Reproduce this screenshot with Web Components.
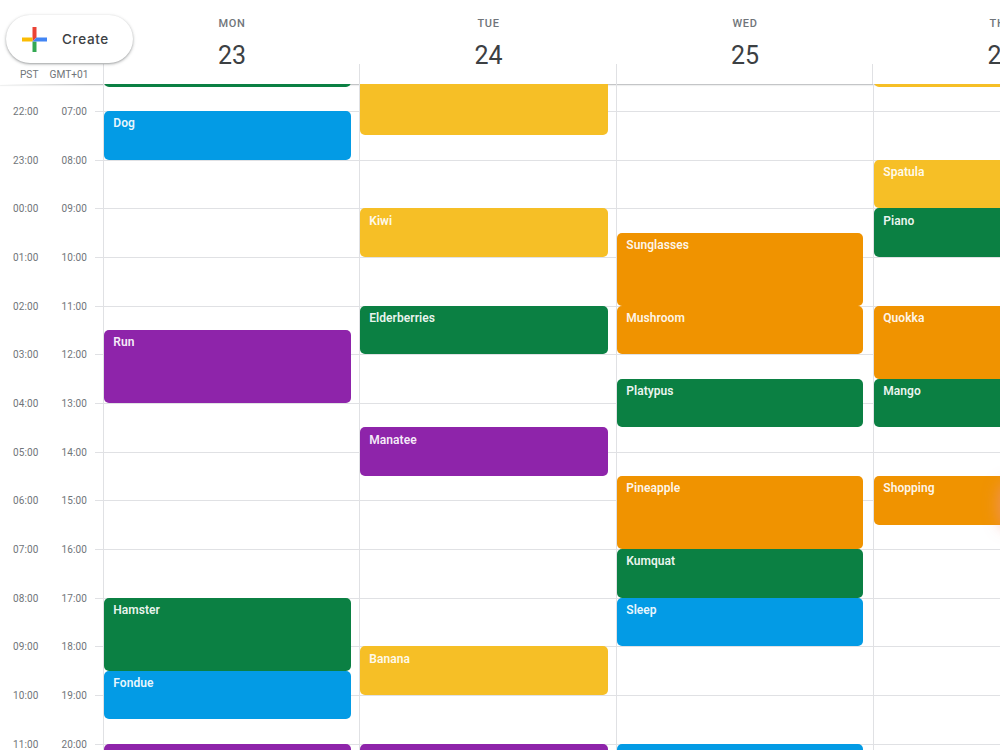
<!DOCTYPE html>
<html lang="en">
<head>
<meta charset="utf-8">
<title>Calendar</title>
<style>
  body {
    margin: 0;
    overflow: hidden;
    background: #fff;
    font-family: Roboto, sans-serif;
  }
</style>
</head>
<body>
<week-calendar>
  <create-button slot="create">Create</create-button>
  <span slot="zone">PST</span>
  <span slot="zone">GMT+01</span>

  <day-heading slot="heading" date="23">MON</day-heading>
  <day-heading slot="heading" date="24">TUE</day-heading>
  <day-heading slot="heading" date="25">WED</day-heading>
  <day-heading slot="heading" date="26">THU</day-heading>

  <time-scale slot="scale" offset="-9"></time-scale>

  <day-column slot="day">
    <calendar-event start="6" end="6.5" color="green"></calendar-event>
    <calendar-event start="7" end="8" color="blue">Dog</calendar-event>
    <calendar-event start="11.5" end="13" color="purple">Run</calendar-event>
    <calendar-event start="17" end="18.5" color="green">Hamster</calendar-event>
    <calendar-event start="18.5" end="19.5" color="blue">Fondue</calendar-event>
    <calendar-event start="20" end="21" color="purple"></calendar-event>
  </day-column>
  <day-column slot="day">
    <calendar-event start="6" end="7.5" color="yellow"></calendar-event>
    <calendar-event start="9" end="10" color="yellow">Kiwi</calendar-event>
    <calendar-event start="11" end="12" color="green">Elderberries</calendar-event>
    <calendar-event start="13.5" end="14.5" color="purple">Manatee</calendar-event>
    <calendar-event start="18" end="19" color="yellow">Banana</calendar-event>
    <calendar-event start="20" end="21" color="purple"></calendar-event>
  </day-column>
  <day-column slot="day" style="--gutter: 10px">
    <calendar-event start="9.5" end="11" color="orange">Sunglasses</calendar-event>
    <calendar-event start="11" end="12" color="orange">Mushroom</calendar-event>
    <calendar-event start="12.5" end="13.5" color="green">Platypus</calendar-event>
    <calendar-event start="14.5" end="16" color="orange">Pineapple</calendar-event>
    <calendar-event start="16" end="17" color="green">Kumquat</calendar-event>
    <calendar-event start="17" end="18" color="blue">Sleep</calendar-event>
    <calendar-event start="20" end="21" color="blue"></calendar-event>
  </day-column>
  <day-column slot="day">
    <calendar-event start="6" end="6.5" color="yellow"></calendar-event>
    <calendar-event start="8" end="9" color="yellow">Spatula</calendar-event>
    <calendar-event start="9" end="10" color="green">Piano</calendar-event>
    <calendar-event start="11" end="12.5" color="orange">Quokka</calendar-event>
    <calendar-event start="12.5" end="13.5" color="green">Mango</calendar-event>
    <calendar-event start="14.5" end="15.5" color="orange">Shopping</calendar-event>
  </day-column>
</week-calendar>

<script>
'use strict'
;(function() {
  const FIRST_HOUR = 6
  const LAST_HOUR = 21

  // attaches an open shadow root filled with the given markup
  function render(element, html) {
    const shadow = element.attachShadow({ mode: 'open' })
    shadow.innerHTML = html
    return shadow
  }

  class WeekCalendar extends HTMLElement {
    constructor() {
      super()
      render(this, `
        <style>
          :host {
            --half: 24.340px;
            --line: #e0e1e4;
            display: flex;
            flex-direction: column;
            position: relative;
            width: 1000px;
            height: 750px;
            overflow: hidden;
          }
          .header {
            display: flex;
            flex: none;
            height: 84px;
          }
          .corner {
            display: flex;
            flex-direction: column;
            flex: none;
            width: 103px;
            height: 84px;
          }
          .zones {
            display: grid;
            grid-template-columns: 38.500px 50px;
            margin-top: 6px;
            line-height: 12px;
            font-size: 10.200px;
            color: #70757a;
            text-align: right;
          }
          .headings,
          .days {
            display: grid;
            flex: none;
            grid-template-columns: 256px 257px 257px 257px;
          }
          .headings {
            grid-template-columns: 256px 257px 256px 257px;
          }
          .rule {
            flex: none;
            height: 1px;
            background: linear-gradient(to right, #fff, #c4c5c7 90px);
            box-shadow: 0 1px 1px rgba(60, 64, 67, 0.1);
          }
          /* overlaps the rule so events cover it */
          .viewport {
            flex: 1;
            min-height: 0;
            margin-top: -1px;
            overflow: hidden;
            position: relative;
          }
          /* scrolled so that the six o'clock row is partly hidden */
          .body {
            display: flex;
            margin-top: -21.650px;
          }
          .glow {
            position: absolute;
            left: 1001px;
            top: 484px;
            width: 50px;
            height: 42px;
            border-radius: 12px;
            box-shadow: 0 0 16px 2px rgba(240, 145, 130, 0.7);
          }
        </style>
        <div class="header">
          <div class="corner">
            <slot name="create"></slot>
            <div class="zones"><slot name="zone"></slot></div>
          </div>
          <div class="headings"><slot name="heading"></slot></div>
        </div>
        <div class="rule"></div>
        <div class="viewport">
          <div class="body">
            <slot name="scale"></slot>
            <div class="days"><slot name="day"></slot></div>
          </div>
        </div>
        <div class="glow"></div>
      `)
    }
  }

  class CreateButton extends HTMLElement {
    constructor() {
      super()
      render(this, `
        <style>
          :host {
            display: flex;
            align-items: center;
            box-sizing: border-box;
            flex: none;
            width: 127px;
            height: 48px;
            margin: 15px 0 0 6px;
            padding-left: 16px;
            border-radius: 24px;
            background: #fff;
            box-shadow: 0 1px 2px rgba(60, 64, 67, 0.35), 0 1px 3px 1px rgba(60, 64, 67, 0.15);
            color: #3c4043;
            font: 500 13.500px Inter, sans-serif;
            letter-spacing: 0.65px;
            position: relative;
            z-index: 2;
          }
          svg {
            width: 25px;
            height: 25px;
            margin-right: 15px;
          }
        </style>
        <svg viewBox="0 0 25 25">
          <path fill="#ea4335" d="M10.5 0h4v10.500l-4 4z"/>
          <path fill="#fbbc04" d="M0 10.500h10.500v4H0z"/>
          <path fill="#34a853" d="M10.500 14.500h4V25h-4z"/>
          <path fill="#4285f4" d="M14.500 10.500H25v4H10.500z"/>
        </svg>
        <slot></slot>
      `)
    }
  }

  class DayHeading extends HTMLElement {
    constructor() {
      super()
      render(this, `
        <style>
          :host {
            display: grid;
            grid-template-rows: 14px 31px 20px;
            row-gap: 1.500px;
            padding-top: 16px;
            text-align: center;
          }
          .name {
            padding-left: 2px;
            line-height: 16px;
            font-size: 11px;
            font-weight: 500;
            letter-spacing: 0.7px;
            color: #70757a;
          }
          .date {
            padding: 8px 0 0 2px;
            line-height: 31px;
            font-size: 25px;
            color: #3c4043;
          }
          .tick {
            border-left: 1px solid var(--line);
          }
        </style>
        <div class="name"><slot></slot></div>
        <div class="date">${this.getAttribute('date')}</div>
        <div class="tick"></div>
      `)
    }
  }

  class TimeScale extends HTMLElement {
    constructor() {
      super()
      const offset = Number(this.getAttribute('offset'))
      const label = hour => `${String((hour + 24) % 24).padStart(2, '0')}:00`

      let rows = ''
      for (let hour = FIRST_HOUR; hour < LAST_HOUR; hour++) {
        rows += `
          <div class="row">
            <span>${label(hour + offset)}</span><span>${label(hour)}</span><i></i>
          </div>`
      }

      render(this, `
        <style>
          :host {
            display: block;
            flex: none;
            width: 103px;
            font-size: 10px;
            line-height: 12px;
            color: #70757a;
            text-align: right;
          }
          .row {
            display: grid;
            grid-template-columns: 38.500px 48.500px 8px;
            height: calc(var(--half) * 2);
          }
          .row span {
            margin-top: -5px;
            letter-spacing: 0.1px;
          }
          .row i {
            margin-left: 8px;
            width: 8px;
            height: 1px;
            background: var(--line);
          }
        </style>
        ${rows}
      `)
    }
  }

  class DayColumn extends HTMLElement {
    constructor() {
      super()
      render(this, `
        <style>
          :host {
            display: grid;
            grid-template-rows: repeat(${(LAST_HOUR - FIRST_HOUR) * 2}, var(--half));
            border-left: 1px solid var(--line);
            padding-right: var(--gutter, 8.500px);
            position: relative;
          }
          /* hour lines run under the events */
          .line {
            grid-column: 1;
            height: 1px;
            margin-right: calc(var(--gutter, 8.500px) * -1);
            background: var(--line);
          }
        </style>
        ${Array.from({ length: LAST_HOUR - FIRST_HOUR }, (_, i) =>
          `<div class="line" style="grid-row: ${i * 2 + 1}"></div>`).join('')}
        <slot></slot>
      `)
    }
  }

  const COLORS = {
    green: '#0b8043',
    blue: '#039be5',
    purple: '#8e24aa',
    yellow: '#f6bf26',
    orange: '#f09300'
  }

  class CalendarEvent extends HTMLElement {
    constructor() {
      super()
      const row = name => (Number(this.getAttribute(name)) - FIRST_HOUR) * 2 + 1
      render(this, `
        <style>
          :host {
            display: block;
            grid-column: 1;
            grid-row: ${row('start')} / ${row('end')};
            box-sizing: border-box;
            padding: 5.400px 9.300px;
            border-radius: 5px;
            background: ${COLORS[this.getAttribute('color')]};
            color: rgba(255, 255, 255, 0.93);
            font-size: 12px;
            font-weight: 600;
            line-height: 15px;
            letter-spacing: 0.05px;
            position: relative;
          }
        </style>
        <slot></slot>
      `)
    }
  }

  customElements.define('week-calendar', WeekCalendar)
  customElements.define('create-button', CreateButton)
  customElements.define('day-heading', DayHeading)
  customElements.define('time-scale', TimeScale)
  customElements.define('day-column', DayColumn)
  customElements.define('calendar-event', CalendarEvent)
})()
</script>
</body>
</html>
